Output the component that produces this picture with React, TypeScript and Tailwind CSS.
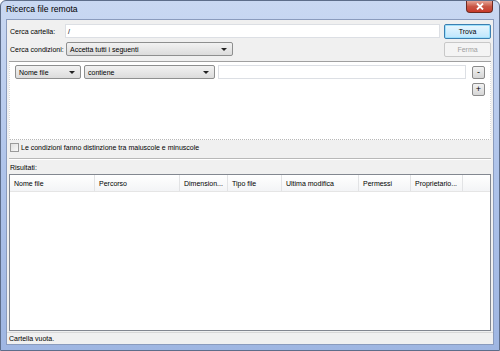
import React from 'react';

const font = { fontFamily: '"Liberation Sans", Arial, sans-serif' };

function Select({ label, className }: { label: string; className: string }) {
  return (
    <div
      className={`flex items-center justify-between h-[14px] border border-[#8e8f8f] rounded-[2px] bg-gradient-to-b from-[#f2f2f2] to-[#dcdcdc] pl-[3px] pr-[5px] text-[7px] text-black ${className}`}
    >
      <span className="leading-none">{label}</span>
      <svg width="6" height="3" viewBox="0 0 6 3">
        <path d="M0 0h6L3 3z" fill="#222" />
      </svg>
    </div>
  );
}

function Button({ label, disabled, focused }: { label: string; disabled?: boolean; focused?: boolean }) {
  return (
    <div
      className={`w-[47px] h-[15px] flex items-center justify-center rounded-[2px] text-[7px] leading-none border ${
        disabled
          ? 'border-[#c8c8c8] bg-[#f4f4f4] text-[#a0a0a0]'
          : focused
          ? 'border-[#3c7fb1] bg-gradient-to-b from-[#e9f6fd] to-[#bee6fd] text-black shadow-[inset_0_0_0_1px_#9ee0fb]'
          : 'border-[#707070] bg-gradient-to-b from-[#f2f2f2] to-[#dddddd] text-black'
      }`}
    >
      {label}
    </div>
  );
}

function SmallButton({ label }: { label: string }) {
  return (
    <div className="w-[13px] h-[13px] flex items-center justify-center border border-[#8a8a8a] rounded-[2px] bg-gradient-to-b from-[#f2f2f2] to-[#d6d6d6] text-[9px] leading-none text-black">
      {label}
    </div>
  );
}

const columns = [
  { name: 'Nome file', w: 85 },
  { name: 'Percorso', w: 85 },
  { name: 'Dimension...', w: 48 },
  { name: 'Tipo file', w: 54 },
  { name: 'Ultima modifica', w: 77 },
  { name: 'Permessi', w: 52 },
  { name: 'Proprietario...', w: 52 },
];

export default function App() {
  return (
    <div
      style={font}
      className="w-[500px] h-[351px] flex flex-col bg-gradient-to-b from-[#c9d8f2] via-[#aec3ea] to-[#9fb6e2] border border-[#5d6d8a] rounded-t-[6px] overflow-hidden"
    >
      {/* Title bar */}
      <div className="h-[18px] flex items-start justify-between pl-[5px]">
        <span className="text-[8.6px] text-black leading-none mt-[4px]">Ricerca file remota</span>
        <div className="w-[27px] h-[12px] mr-[6px] rounded-b-[4px] border border-[#6d2a22] border-t-0 bg-gradient-to-b from-[#e4a395] via-[#c85645] to-[#c9392a] flex items-center justify-center">
          <svg width="8" height="7" viewBox="0 0 8 7">
            <path d="M1 0.5l6 6M7 0.5l-6 6" stroke="#fff" strokeWidth="1.8" />
          </svg>
        </div>
      </div>

      {/* Client area */}
      <div className="flex-1 mx-[5px] mb-[5px] bg-[#f0f0f0] border border-[#8a9bbd] flex flex-col text-[7px] text-black">
        {/* Search folder */}
        <div className="flex items-center h-[16px] mt-[3px] pl-[3px] pr-[2px] gap-[2px]">
          <span className="w-[53px] leading-none">Cerca cartella:</span>
          <div className="flex-1 h-[14px] bg-white border border-[#dcdfe4] flex items-center px-[2px] leading-none">/</div>
          <div className="ml-[2px]">
            <Button label="Trova" focused />
          </div>
        </div>
        {/* Conditions */}
        <div className="flex items-center h-[16px] mt-[2px] pl-[3px] pr-[2px] gap-[2px]">
          <span className="w-[54px] leading-none whitespace-nowrap">Cerca condizioni:</span>
          <Select label="Accetta tutti i seguenti" className="w-[167px]" />
          <div className="flex-1" />
          <Button label="Ferma" disabled />
        </div>

        <div className="mx-[2px] mt-[4px] border-t border-[#a0a0a0] border-b border-b-white" />

        {/* Condition panel */}
        <div className="mx-[2px] h-[77px] bg-white border-l border-r border-[#dcdcdc] border-b border-dotted border-b-[#b8b8b8] flex flex-col px-[5px] pt-[2px]">
          <div className="flex items-center gap-[3px]">
            <Select label="Nome file" className="w-[66px]" />
            <Select label="contiene" className="w-[131px]" />
            <div className="flex-1 h-[14px] border border-[#dcdfe4] bg-white" />
            <div className="ml-[3px]">
              <SmallButton label="-" />
            </div>
          </div>
          <div className="flex justify-end mt-[4px]">
            <SmallButton label="+" />
          </div>
        </div>

        {/* Case sensitive */}
        <div className="flex items-center gap-[2px] pl-[3px] mt-[2px] h-[10px]">
          <div className="w-[9px] h-[9px] border border-[#9a9a9a] bg-gradient-to-br from-[#e0e0e0] to-[#f8f8f8]" />
          <span className="leading-none">Le condizioni fanno distinzione tra maiuscole e minuscole</span>
        </div>

        <div className="mx-[2px] mt-[6px] border-t border-[#b8b8b8] border-b border-b-white" />

        {/* Results */}
        <div className="pl-[3px] mt-[4px] leading-none">Risultati:</div>
        <div className="flex-1 mx-[2px] mt-[3px] bg-white border border-[#828790] flex flex-col">
          <div className="flex h-[17px] bg-gradient-to-b from-white to-[#f3f4f6] border-b border-[#e5e5e5]">
            {columns.map((c) => (
              <div
                key={c.name}
                style={{ width: c.w }}
                className="flex items-center pl-[4px] border-r border-[#e2e3e5] leading-none whitespace-nowrap overflow-hidden"
              >
                {c.name}
              </div>
            ))}
          </div>
          <div className="flex-1" />
        </div>

        {/* Status bar */}
        <div className="h-[12px] mt-[1px] border-t border-[#d8d8d8] flex items-center pl-[2px] leading-none">
          Cartella vuota.
        </div>
      </div>
    </div>
  );
}
